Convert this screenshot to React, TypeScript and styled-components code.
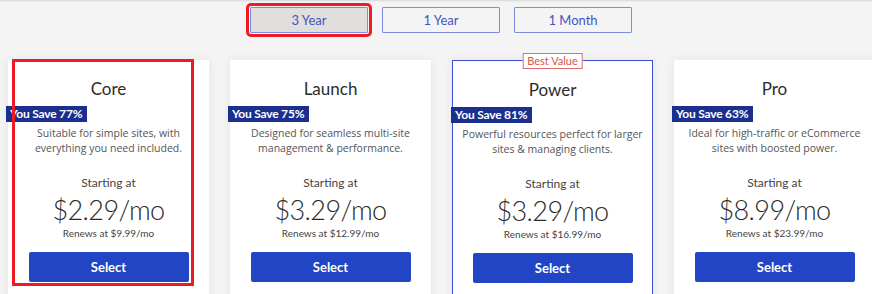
import React from "react";
import styled, { createGlobalStyle } from "styled-components";

const GlobalStyle = createGlobalStyle`
  html, body {
    margin: 0;
    padding: 0;
    background: #ffffff;
    overflow: hidden;
  }
  * { box-sizing: border-box; }
`;

const Page = styled.div`
  width: 872px;
  height: 294px;
  overflow: hidden;
  background: #f4f4f4;
  box-shadow: inset 0 2px 2px -1px rgba(0, 0, 0, 0.12);
  font-family: "Lato", "Liberation Sans", sans-serif;
`;

const TermRow = styled.div`
  display: flex;
  justify-content: center;
  gap: 14px;
  padding: 7px 0 0 10px;
`;

const TermButton = styled.button<{ $active?: boolean }>`
  width: 118px;
  height: 26px;
  padding: 0;
  border: 1px solid #7d8ee0;
  border-radius: 1px;
  background: ${(p) => (p.$active ? "#e0dfdd" : "transparent")};
  color: #4454c0;
  font-family: "Lato", sans-serif;
  font-size: 13px;
  outline: ${(p) => (p.$active ? "3px solid #ec1c24" : "none")};
  outline-offset: 1px;
`;

const CardRow = styled.div`
  display: flex;
  gap: 21px;
  padding: 27px 0 0 8px;
`;

const Card = styled.div<{ $featured?: boolean }>`
  position: relative;
  flex: 0 0 201px;
  height: 260px;
  display: flex;
  flex-direction: column;
  align-items: center;
  padding-top: 19px;
  background: #ffffff;
  border: ${(p) => (p.$featured ? "1px solid #3d50d2" : "none")};
  box-shadow: 0 0 9px rgba(0, 0, 0, 0.07);
`;

const Ribbon = styled.div`
  position: absolute;
  top: -8px;
  left: 50%;
  transform: translateX(-50%);
  padding: 0 4px;
  height: 16px;
  line-height: 14px;
  background: #ffffff;
  border: 1px solid #d9706f;
  color: #d9534f;
  font-size: 11px;
  white-space: nowrap;
`;

const Highlight = styled.div`
  position: absolute;
  left: 4px;
  top: -1px;
  width: 182px;
  height: 227px;
  border: 3px solid #ec1c24;
  z-index: 2;
  pointer-events: none;
`;

const Title = styled.h2`
  margin: 0;
  font-size: 17px;
  line-height: 20px;
  font-weight: 400;
  color: #2d2d2d;
`;

const Savings = styled.div`
  align-self: flex-start;
  margin: 7px 0 0 -2px;
  height: 16px;
  line-height: 16px;
  padding: 0 5px 0 4px;
  background: #1b2f8e;
  color: #ffffff;
  font-size: 12px;
  font-weight: 700;
  letter-spacing: -0.2px;
`;

const Blurb = styled.p`
  margin: 4px 0 0;
  text-align: center;
  white-space: nowrap;
  font-family: "Open Sans", sans-serif;
  font-size: 10.5px;
  line-height: 15px;
  color: #555555;
`;

const StartLabel = styled.div`
  margin-top: 19px;
  font-size: 12px;
  line-height: 16px;
  color: #444444;
`;

const Price = styled.div`
  margin-top: 4px;
  font-size: 27px;
  line-height: 30px;
  font-weight: 300;
  color: #2a2a2a;
  letter-spacing: -0.6px;
`;

const Renews = styled.div`
  margin-top: 2px;
  font-size: 10px;
  line-height: 12px;
  color: #444444;
`;

const SelectButton = styled.button`
  margin-top: 13px;
  width: 160px;
  height: 30px;
  border: none;
  border-radius: 2px;
  background: #2145c4;
  color: #ffffff;
  font-family: "Lato", sans-serif;
  font-size: 13px;
  font-weight: 700;
`;

type Plan = {
  name: string;
  save: string;
  blurb: string[];
  price: string;
  renews: string;
  featured?: boolean;
  highlighted?: boolean;
};

const plans: Plan[] = [
  {
    name: "Core",
    save: "You Save 77%",
    blurb: ["Suitable for simple sites, with", "everything you need included."],
    price: "$2.29",
    renews: "Renews at $9.99/mo",
    highlighted: true,
  },
  {
    name: "Launch",
    save: "You Save 75%",
    blurb: ["Designed for seamless multi-site", "management & performance."],
    price: "$3.29",
    renews: "Renews at $12.99/mo",
  },
  {
    name: "Power",
    save: "You Save 81%",
    blurb: ["Powerful resources perfect for larger", "sites & managing clients."],
    price: "$3.29",
    renews: "Renews at $16.99/mo",
    featured: true,
  },
  {
    name: "Pro",
    save: "You Save 63%",
    blurb: ["Ideal for high-traffic or eCommerce", "sites with boosted power."],
    price: "$8.99",
    renews: "Renews at $23.99/mo",
  },
];

export default function App() {
  return (
    <>
      <GlobalStyle />
      <Page>
        <TermRow>
          <TermButton $active>3 Year</TermButton>
          <TermButton>1 Year</TermButton>
          <TermButton>1 Month</TermButton>
        </TermRow>
        <CardRow>
          {plans.map((plan) => (
            <Card key={plan.name} $featured={plan.featured}>
              {plan.featured && <Ribbon>Best Value</Ribbon>}
              {plan.highlighted && <Highlight />}
              <Title>{plan.name}</Title>
              <Savings>{plan.save}</Savings>
              <Blurb>
                {plan.blurb[0]}
                <br />
                {plan.blurb[1]}
              </Blurb>
              <StartLabel>Starting at</StartLabel>
              <Price>{plan.price}/mo</Price>
              <Renews>{plan.renews}</Renews>
              <SelectButton>Select</SelectButton>
            </Card>
          ))}
        </CardRow>
      </Page>
    </>
  );
}
